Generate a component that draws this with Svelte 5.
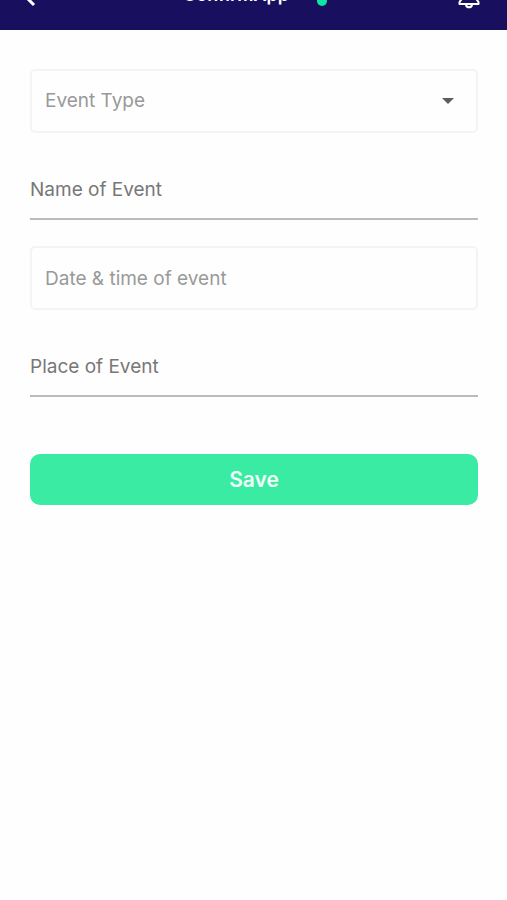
<script>
	let eventType = '';
	let name = '';
	let date = '';
	let place = '';

	const types = ['Birthday', 'Wedding', 'Meeting', 'Party'];
</script>

<header>
	<div class="bar">
		<button class="icon back" aria-label="Back">
			<svg width="14" height="24" viewBox="0 0 14 24">
				<path d="M12 3 L3 12 L12 21" />
			</svg>
		</button>
		<div class="title">
			<h1>ConfirmApp</h1>
			<span class="dot"></span>
		</div>
		<button class="icon bell" aria-label="Notifications">
			<svg width="22" height="26" viewBox="0 0 22 26">
				<path d="M11 2 C6.500 2 4.500 5.500 4.500 9 V15 L1.500 19 V21 H20.500 V19 L17.500 15 V9 C17.500 5.500 15.500 2 11 2 Z" />
				<path d="M8 21.500 C8.500 25.300 13.500 25.300 14 21.500" />
			</svg>
		</button>
	</div>
</header>

<form on:submit|preventDefault>
	<div class="select">
		<select class="box" aria-label="Event Type" bind:value={eventType}>
			<option value="">Event Type</option>
			{#each types as type}
				<option value={type}>{type}</option>
			{/each}
		</select>
		<svg class="caret" width="12" height="6" viewBox="0 0 12 6">
			<path d="M0 0 H12 L6 6 Z" />
		</svg>
	</div>
	<input class="line" type="text" placeholder="Name of Event" aria-label="Name of Event" bind:value={name} />
	<input class="box" type="text" placeholder="Date & time of event" aria-label="Date & time of event" bind:value={date} />
	<input class="line" type="text" placeholder="Place of Event" aria-label="Place of Event" bind:value={place} />
	<button class="save">Save</button>
</form>

<style>
	:global(body) {
		background: #fefefe;
		font-family: Inter, 'Liberation Sans', sans-serif;
	}

	header {
		height: 30px;
		background: #180f5e;
		display: flex;
		align-items: flex-end;
		overflow: hidden;
	}

	.bar {
		flex: 1;
		height: 68px;
		padding: 0 27px 0 22px;
		display: flex;
		flex-shrink: 0;
		align-items: center;
		justify-content: space-between;
	}

	.icon {
		padding: 0;
		border: 0;
		background: none;
		display: flex;
	}

	.icon path {
		fill: none;
		stroke: #fff;
		stroke-width: 2;
		stroke-linejoin: round;
	}

	.back path {
		stroke-width: 3;
	}

	.title {
		margin-left: 16px;
		display: flex;
		align-items: center;
		gap: 28px;
	}

	h1 {
		margin: 0;
		padding-bottom: 2px;
		color: #fff;
		font-size: 18px;
		line-height: 24px;
		font-weight: 600;
	}

	.dot {
		width: 10px;
		height: 10px;
		margin-top: 10px;
		border-radius: 50%;
		background: #0ee5a3;
	}

	form {
		padding: 39px 29px 0 30px;
		display: flex;
		flex-direction: column;
	}

	.select {
		display: grid;
		align-items: center;
	}

	.select > :global(*) {
		grid-area: 1 / 1;
	}

	.caret {
		justify-self: end;
		margin-right: 24px;
		pointer-events: none;
		fill: #5c5c5c;
	}

	.box,
	.line {
		width: 100%;
		box-sizing: border-box;
		margin: 0;
		font-family: inherit;
		font-size: 19px;
		line-height: 24px;
		background: transparent;
		outline: 0;
	}

	.box {
		height: 64px;
		padding: 0 13px;
		border: 2px solid #f4f4f4;
		border-radius: 5px;
		color: #999;
		appearance: none;
	}

	.line {
		height: 60px;
		margin: 27px 0 26px;
		padding: 0;
		border: 0;
		border-bottom: 2px solid #bbb;
		border-radius: 0;
		color: #777;
	}

	.box::placeholder,
	.line::placeholder {
		color: inherit;
		opacity: 1;
	}

	.save {
		height: 51px;
		margin-top: 31px;
		border: 0;
		border-radius: 10px;
		background: #3aeba3;
		color: #f0fff8;
		font-family: inherit;
		font-size: 21px;
		font-weight: 600;
	}
</style>
